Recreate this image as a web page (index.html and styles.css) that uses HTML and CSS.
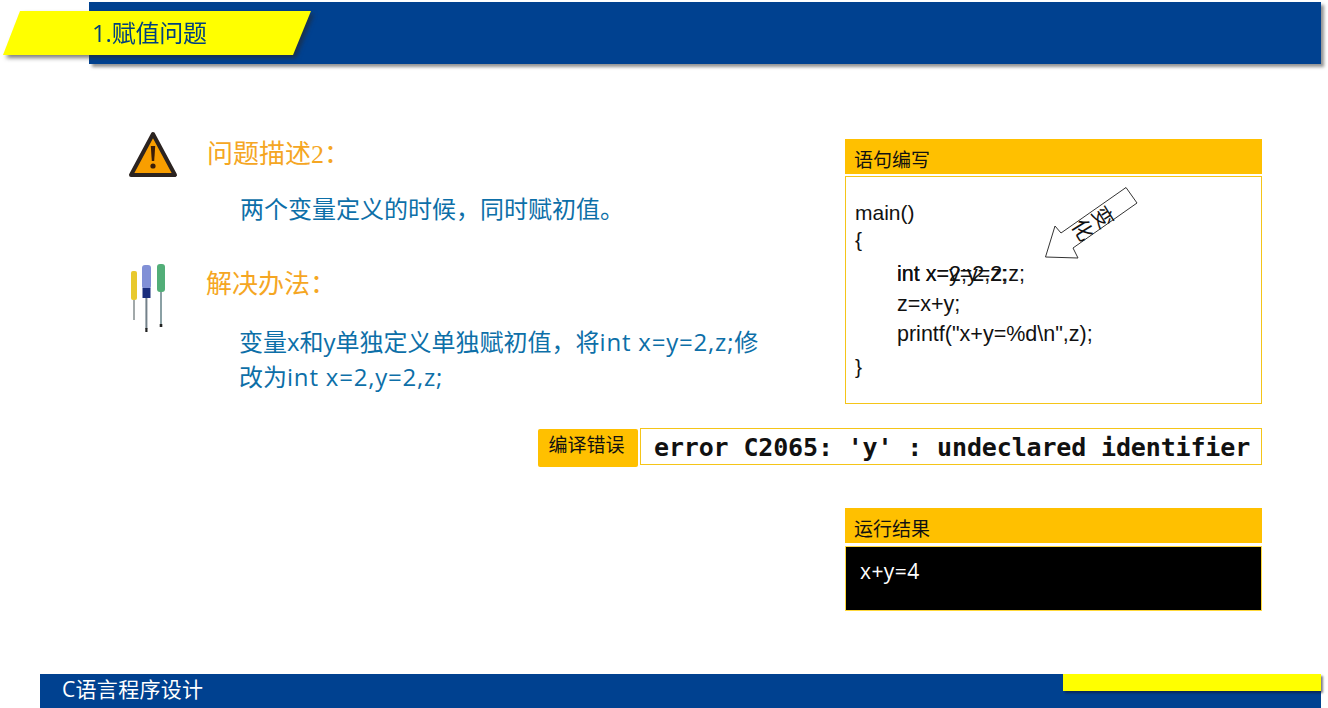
FILE: index.html
```html
<!DOCTYPE html>
<html lang="zh-CN">
<head>
<meta charset="utf-8">
<title>1.赋值问题</title>
<link rel="stylesheet" href="styles.css">
</head>
<body>
<div class="slide">
  <header class="band">
    <div class="banner"><div class="banner-shape"><span class="banner-text">1.赋值问题</span></div></div>
  </header>
  <main class="content">
    <section class="notes">
      <div class="note-head first">
        <svg class="warn" width="50" height="48" viewBox="0 0 50 48"><path d="M25 3 L47 44 H3 Z" fill="#f89e00" stroke="#2b2320" stroke-width="4" stroke-linejoin="round"/><path d="M22.8 15 h4.4 l-1 15 h-2.4 Z" fill="#3a1d08"/><circle cx="25" cy="35" r="2.6" fill="#3a1d08"/></svg>
        <h2 class="note-title">问题描述<span class="serif">2</span>：</h2>
      </div>
      <p class="note-body one">两个变量定义的时候<span class="tc">，</span>同时赋初值。</p>
      <div class="note-head second">
        <svg class="tools" width="40" height="70" viewBox="0 0 40 70">
          <rect x="1" y="7" width="6" height="29" rx="2" fill="#e8c92e"/><rect x="3.2" y="36" width="1.6" height="20" fill="#8c9496"/>
          <rect x="12" y="1" width="9" height="24" rx="3" fill="#8190d6"/><rect x="12.5" y="24" width="8" height="10" fill="#1a2d7c"/><rect x="15.4" y="34" width="2" height="31" fill="#73818a"/><rect x="15.3" y="64" width="2.2" height="4" fill="#222"/>
          <rect x="27" y="0" width="8" height="28" rx="3" fill="#52ae78"/><rect x="30" y="28" width="2" height="32" fill="#8aa0a4"/><rect x="29.7" y="60" width="2.6" height="3" fill="#222"/>
        </svg>
        <h2 class="note-title">解决办法：</h2>
      </div>
      <p class="note-body two">变量x和y单独定义单独赋初值<span class="tc">，</span>将<span class="latin">int x=y=2,z;</span>修<br>改为<span class="latin">int x=2,y=2,z;</span></p>
    </section>
    <section class="panel code-panel">
      <div class="panel-title">语句编写</div>
      <div class="code-box">
        <div class="code-line l1">main()</div>
        <div class="code-line l2">{</div>
        <div class="code-line indent l3"><span class="overlap"><span>int x=y=2,z;</span><span>int x=2;y=2;z;</span></span></div>
        <div class="code-line indent l4">z=x+y;</div>
        <div class="code-line indent l5">printf("x+y=%d\n",z);</div>
        <div class="code-line l6">}</div>
        <div class="callout">
          <svg width="96" height="76" viewBox="0 0 96 76"><path d="M82 .5 L93 16 L29 61 L34 71 L1.5 70 L11 39 L17 46 Z" fill="#fff" stroke="#333" stroke-width="1"/></svg>
          <span class="callout-text">变化</span>
        </div>
      </div>
    </section>
    <section class="error-row">
      <div class="error-tag">编译错误</div>
      <div class="error-box">error C2065: 'y' : undeclared identifier</div>
    </section>
    <section class="panel result-panel">
      <div class="panel-title">运行结果</div>
      <div class="console">x+y=4</div>
    </section>
  </main>
  <footer class="footer">
    <span class="footer-text">C语言程序设计</span>
    <div class="footer-accent"></div>
  </footer>
</div>
</body>
</html>
```
FILE: styles.css
```css
* { box-sizing: border-box; }
html, body { margin: 0; padding: 0; background: #fff; }
body { font-family: "Liberation Sans", "Noto Sans CJK SC", sans-serif; }
.slide { position: relative; width: 1328px; height: 708px; overflow: hidden; display: flex; flex-direction: column; background: #fff; }

.band { position: relative; margin: 2px 7px 0 89px; height: 62px; flex: none; background: #004190; box-shadow: 3px 3px 3px rgba(60,60,60,.55); }
.banner { position: absolute; left: -86px; top: 9px; filter: drop-shadow(3px 3px 2px rgba(40,40,40,.6)); }
.banner-shape { width: 308px; height: 44px; background: #ffff00; clip-path: polygon(17px 0, 100% 0, 290px 100%, 0 100%); display: flex; align-items: center; padding: 0 0 3px 89px; }
.banner-text { font-family: "Open Sans", "Noto Sans CJK SC", sans-serif; font-size: 24px; color: #00407f; letter-spacing: -0.2px; }

.content { flex: 1; display: grid; grid-template-columns: 845px 417px; grid-template-rows: 265px 104px 143px; align-content: start; padding-top: 75px; }
.notes { grid-column: 1; grid-row: 1; padding-left: 128px; }
.note-head { display: flex; align-items: flex-start; }
.note-head.second { margin-top: 39px; }
.warn { flex: none; margin-top: -8px; }
.tools { flex: none; margin: 0 0 0 2px; }
.note-title { margin: 0; font-weight: 400; font-size: 26px; line-height: 30px; color: #f5a623; font-family: "Liberation Serif", "Noto Sans CJK SC", serif; }
.first .note-title { margin: 1px 0 0 29px; }
.second .note-title { margin: 6px 0 0 36px; }
.serif { font-family: "Liberation Serif", serif; }
.note-body { margin: 0; font-family: "Open Sans", "Noto Sans CJK SC", sans-serif; font-size: 24px; line-height: 34px; color: #0d6fa8; }
.tc { font-family: "Noto Sans CJK TC", sans-serif; }
.latin { letter-spacing: .8px; }
.note-body.one { margin: 13px 0 0 112px; line-height: 32px; }
.note-body.two { margin: -11px 0 0 111px; line-height: 35px; white-space: nowrap; }

.panel { grid-column: 2; display: flex; flex-direction: column; gap: 2px; }
.code-panel { grid-row: 1; }
.result-panel { grid-row: 3; gap: 3px; }
.panel-title { height: 35px; background: #ffc000; font-size: 19px; line-height: 39px; padding-left: 9px; color: #111; font-family: "Noto Sans CJK SC", sans-serif; }
.code-box { position: relative; height: 228px; border: 1px solid #f5c518; padding: 22px 0 0 9px; font-size: 21px; color: #111; }
.code-line { line-height: 27px; height: 27px; white-space: pre; }
.code-line.indent { padding-left: 42px; font-size: 21.5px; }
.l3 { height: 30px; line-height: 30px; margin-top: 6px; }
.l4 { height: 30px; line-height: 30px; }
.l5 { height: 30px; line-height: 30px; }
.l6 { margin-top: 4px; }
.overlap { display: inline-grid; }
.overlap > span { grid-area: 1 / 1; }
.callout { position: absolute; left: 198px; top: 10px; width: 96px; height: 76px; }
.callout svg { display: block; }
.callout-text { position: absolute; left: 37px; top: 13px; width: 22px; height: 48px; writing-mode: vertical-rl; font-family: "Noto Sans CJK SC", sans-serif; font-size: 21px; line-height: 22px; letter-spacing: 3px; color: #111; transform: rotate(58deg); white-space: nowrap; }

.error-row { grid-column: 1 / 3; grid-row: 2; display: flex; justify-content: flex-end; align-items: flex-start; gap: 2px; padding-top: 25px; }
.error-tag { width: 100px; height: 38px; background: #ffc000; border-radius: 2px; font-family: "Noto Sans CJK SC", sans-serif; font-size: 19px; line-height: 30px; padding-right: 3px; text-align: center; color: #111; }
.error-box { width: 622px; height: 37px; margin-top: -1px; border: 1px solid #f5c518; background: #fff; font-family: "DejaVu Sans Mono", monospace; font-weight: 700; font-size: 25px; line-height: 37px; padding-left: 13px; letter-spacing: -0.15px; color: #111; white-space: nowrap; }

.console { height: 65px; background: #000; border: 1px solid #ffd83a; color: #fff; font-family: "Open Sans", sans-serif; font-size: 21px; letter-spacing: .4px; line-height: 48px; padding-left: 14px; }

.footer { position: relative; margin: 0 7px 0 40px; height: 34px; flex: none; background: #004190; }
.footer-text { display: block; padding-left: 22px; font-family: "Open Sans", "Noto Sans CJK SC", sans-serif; font-size: 21px; letter-spacing: .3px; line-height: 31px; color: #fff; }
.footer-accent { position: absolute; right: 0; top: 0; width: 258px; height: 17px; background: #ffff00; box-shadow: 2px 2px 2px rgba(20,20,40,.55); }
```
